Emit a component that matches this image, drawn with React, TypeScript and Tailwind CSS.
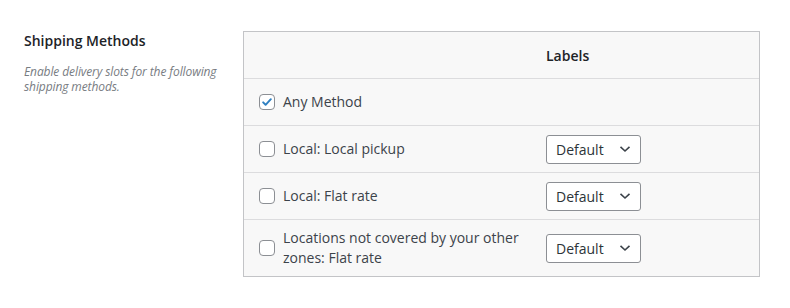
import React, { useState } from 'react';

interface ShippingMethod {
    id: string;
    label: string;
    hasLabel: boolean;
}

const methods: ShippingMethod[] = [
    { id: 'any', label: 'Any Method', hasLabel: false },
    { id: 'local_pickup', label: 'Local: Local pickup', hasLabel: true },
    { id: 'local_flat', label: 'Local: Flat rate', hasLabel: true },
    { id: 'other_flat', label: 'Locations not covered by your other zones: Flat rate', hasLabel: true },
];

function Checkbox({ checked, onChange }: { checked: boolean; onChange: () => void }) {
    return (
        <button
            type="button"
            onClick={onChange}
            className="w-4 h-4 shrink-0 rounded-[4px] border border-[#8c8f94] bg-white flex items-center justify-center"
        >
            {checked && (
                <svg width="14" height="14" viewBox="0 0 20 20" className="block">
                    <path d="M4.5 10.5l3.5 3.5 7.5-8" fill="none" stroke="#2f80c2" strokeWidth="2.8" strokeLinecap="round" strokeLinejoin="round" />
                </svg>
            )}
        </button>
    );
}

function LabelSelect() {
    return (
        <div className="w-[95px] h-[29px] rounded-[3px] border border-[#8c8f94] bg-white flex items-center justify-between pl-[9px] pr-[9px] text-[#2c3338]">
            <span>Default</span>
            <svg width="12" height="8" viewBox="0 0 12 8">
                <path d="M1.5 1.8l4.5 4.2 4.5-4.2" fill="none" stroke="#3c434a" strokeWidth="1.6" />
            </svg>
        </div>
    );
}

export default function App() {
    const [checked, setChecked] = useState<Record<string, boolean>>({ any: true });

    return (
        <div className="w-[790px] h-[308px] bg-white flex pt-[31px] text-[14px] text-[#3c434a]" style={{ fontFamily: '"Open Sans", "Noto Sans", sans-serif' }}>
            {/* columna de descripción */}
            <div className="w-[243px] pl-6 pr-4">
                <h3 className="font-semibold text-[#1d2327] leading-5">Shipping Methods</h3>
                <p className="mt-[13px] italic text-[12px] leading-[15px] text-[#787c82] tracking-[-0.1px]">
                    Enable delivery slots for the following shipping methods.
                </p>
            </div>

            {/* tabla de métodos */}
            <div className="w-[517px] self-start border border-[#c3c4c7] bg-[#f8f8f8]">
                <div className="h-[47px] flex items-center border-b border-[#dcdcde]">
                    <div className="w-[302px]" />
                    <div className="font-semibold text-[#1d2327]">Labels</div>
                </div>

                {methods.map((m, i) => (
                    <div
                        key={m.id}
                        className={`flex items-center ${i < methods.length - 1 ? 'h-[47px] border-b border-[#dcdcde]' : 'h-[56px]'}`}
                    >
                        <div className="w-[302px] flex items-center gap-2 pl-[15px] pr-[22px]">
                            <Checkbox
                                checked={!!checked[m.id]}
                                onChange={() => setChecked((prev) => ({ ...prev, [m.id]: !prev[m.id] }))}
                            />
                            <span className="leading-5">{m.label}</span>
                        </div>
                        {m.hasLabel && <LabelSelect />}
                    </div>
                ))}
            </div>
        </div>
    );
}
